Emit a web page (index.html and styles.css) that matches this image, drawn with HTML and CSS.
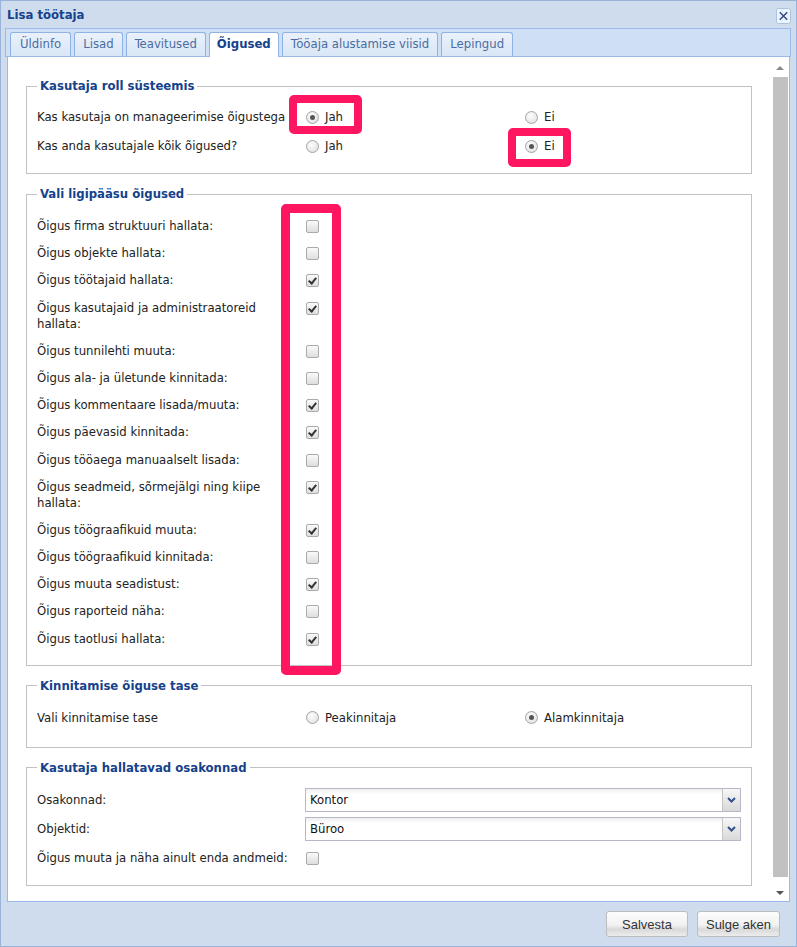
FILE: index.html
```html
<!DOCTYPE html>
<html lang="et">
<head>
<meta charset="utf-8">
<title>Lisa töötaja</title>
<link rel="stylesheet" href="styles.css">
</head>
<body>
<div class="window">
  <div class="titlebar">
    <span class="title">Lisa töötaja</span>
    <span class="close">
      <svg width="15" height="16" viewBox="0 0 15 16"><rect x="0.5" y="0.5" width="14" height="15" rx="2" fill="#eef4fc" stroke="#a9c2e3"/><path d="M3.8 4.3l7.4 7.4M11.2 4.3l-7.4 7.4" stroke="#2f4f86" stroke-width="1.5"/></svg>
    </span>
  </div>

  <div class="tabstrip">
    <div class="tab">Üldinfo</div>
    <div class="tab">Lisad</div>
    <div class="tab">Teavitused</div>
    <div class="tab active">Õigused</div>
    <div class="tab">Tööaja alustamise viisid</div>
    <div class="tab">Lepingud</div>
  </div>

  <div class="body">
    <div class="content">
      <fieldset class="fs fs-role">
        <legend>Kasutaja roll süsteemis</legend>
        <div class="row">
          <span class="label">Kas kasutaja on manageerimise õigustega</span>
          <span class="opt"><span class="radio on"></span>Jah</span>
          <span class="opt"><span class="radio"></span>Ei</span>
        </div>
        <div class="row">
          <span class="label">Kas anda kasutajale kõik õigused?</span>
          <span class="opt"><span class="radio"></span>Jah</span>
          <span class="opt"><span class="radio on"></span>Ei</span>
        </div>
      </fieldset>

      <fieldset class="fs fs-rights">
        <legend>Vali ligipääsu õigused</legend>
        <div class="crow"><span class="label">Õigus firma struktuuri hallata:</span><span class="cb"></span></div>
        <div class="crow"><span class="label">Õigus objekte hallata:</span><span class="cb"></span></div>
        <div class="crow"><span class="label">Õigus töötajaid hallata:</span><span class="cb on"></span></div>
        <div class="crow"><span class="label">Õigus kasutajaid ja administraatoreid<br>hallata:</span><span class="cb on"></span></div>
        <div class="crow"><span class="label">Õigus tunnilehti muuta:</span><span class="cb"></span></div>
        <div class="crow"><span class="label">Õigus ala- ja ületunde kinnitada:</span><span class="cb"></span></div>
        <div class="crow"><span class="label">Õigus kommentaare lisada/muuta:</span><span class="cb on"></span></div>
        <div class="crow"><span class="label">Õigus päevasid kinnitada:</span><span class="cb on"></span></div>
        <div class="crow"><span class="label">Õigus tööaega manuaalselt lisada:</span><span class="cb"></span></div>
        <div class="crow"><span class="label">Õigus seadmeid, sõrmejälgi ning kiipe<br>hallata:</span><span class="cb on"></span></div>
        <div class="crow"><span class="label">Õigus töögraafikuid muuta:</span><span class="cb on"></span></div>
        <div class="crow"><span class="label">Õigus töögraafikuid kinnitada:</span><span class="cb"></span></div>
        <div class="crow"><span class="label">Õigus muuta seadistust:</span><span class="cb on"></span></div>
        <div class="crow"><span class="label">Õigus raporteid näha:</span><span class="cb"></span></div>
        <div class="crow"><span class="label">Õigus taotlusi hallata:</span><span class="cb on"></span></div>
      </fieldset>

      <fieldset class="fs fs-level">
        <legend>Kinnitamise õiguse tase</legend>
        <div class="row">
          <span class="label">Vali kinnitamise tase</span>
          <span class="opt"><span class="radio"></span>Peakinnitaja</span>
          <span class="opt"><span class="radio on"></span>Alamkinnitaja</span>
        </div>
      </fieldset>

      <fieldset class="fs fs-dept">
        <legend>Kasutaja hallatavad osakonnad</legend>
        <div class="combo-row">
          <span class="label">Osakonnad:</span>
          <div class="combo"><span class="combo-text">Kontor</span><span class="trigger"><svg width="9" height="6" viewBox="0 0 9 6"><path d="M1 1l3.5 3.5L8 1" stroke="#33508c" stroke-width="2" fill="none"/></svg></span></div>
        </div>
        <div class="combo-row">
          <span class="label">Objektid:</span>
          <div class="combo"><span class="combo-text">Büroo</span><span class="trigger"><svg width="9" height="6" viewBox="0 0 9 6"><path d="M1 1l3.5 3.5L8 1" stroke="#33508c" stroke-width="2" fill="none"/></svg></span></div>
        </div>
        <div class="crow own">
          <span class="label">Õigus muuta ja näha ainult enda andmeid:</span><span class="cb"></span>
        </div>
      </fieldset>
    </div>

    <div class="scrollbar">
      <div class="arrow up"></div>
      <div class="thumb"></div>
      <div class="arrow down"></div>
    </div>
  </div>

  <div class="footer">
    <button class="btn">Salvesta</button>
    <button class="btn">Sulge aken</button>
  </div>

  <div class="mark mark-jah"></div>
  <div class="mark mark-ei"></div>
  <div class="mark mark-checks"></div>
</div>
</body>
</html>
```

FILE: styles.css
```css
* { box-sizing: border-box; }

html, body {
  margin: 0;
  padding: 0;
  background: #cfdcee;
}

body {
  font-family: "DejaVu Sans Condensed", "DejaVu Sans", sans-serif;
  font-size: 13px;
  color: #222;
}

.window {
  position: relative;
  width: 797px;
  height: 947px;
  background: #cfdcee;
  border: 1px solid #99b4d8;
  display: flex;
  flex-direction: column;
}

/* title */
.titlebar {
  height: 27px;
  display: flex;
  align-items: center;
  justify-content: space-between;
  padding: 0 5px 0 6px;
}
.title {
  font-weight: bold;
  color: #15428b;
  line-height: 16px;
}
.close {
  display: flex;
  width: 15px;
  height: 16px;
  margin-top: 2px;
}

/* tabs */
.tabstrip {
  height: 29px;
  margin: 0 5px 0 4px;
  background: #cfe0f6;
  border: 1px solid #99bbe8;
  display: flex;
  align-items: flex-end;
  gap: 3px;
  padding: 0 0 0 4px;
  position: relative;
}
.tab {
  height: 24px;
  line-height: 22px;
  padding: 0 8px;
  color: #4b6d9e;
  border: 1px solid #8db2e3;
  border-bottom: none;
  border-radius: 3px 3px 0 0;
  background: linear-gradient(#eaf1fb, #d9e6f6);
}
.tab:first-child { padding: 0 9px; }
.tab.active {
  background: #fff;
  color: #15428b;
  font-weight: bold;
  height: 25px;
  margin-bottom: -1px;
  padding: 0 7px;
}

/* body */
.body {
  height: 845px;
  margin: 0 6px 0 6px;
  background: #fff;
  border: 1px solid #99bbe8;
  border-top: none;
  display: flex;
}
.content {
  flex: 1;
  padding: 21px 19px 0 18px;
}

.fs {
  border: 1px solid #c2c2c2;
  margin: 0 0 12px 0;
  padding: 15px 10px 19px 10px;
  min-width: 0;
}
.fs legend {
  font-weight: bold;
  color: #15428b;
  padding: 0 3px;
  line-height: 16px;
}

.fs-role { padding-bottom: 19px; }
.fs-role .row + .row { margin-top: 13px; }
.fs-rights { padding-top: 16px; padding-bottom: 18px; }
.fs-level { padding-top: 16px; padding-bottom: 21px; }
.fs-dept { padding-top: 12px; }

.row {
  display: grid;
  grid-template-columns: 269px 219px auto;
  align-items: center;
  line-height: 16px;
}
.opt {
  display: flex;
  align-items: center;
  gap: 6px;
}

.radio {
  width: 13px;
  height: 13px;
  border-radius: 50%;
  border: 1px solid #a4a4a4;
  background: radial-gradient(circle at 40% 35%, #fdfdfd, #dcdcdc);
  display: inline-flex;
  align-items: center;
  justify-content: center;
}
.radio.on::after {
  content: "";
  width: 5px;
  height: 5px;
  border-radius: 50%;
  background: #555;
}

.fs-rights {
  display: flex;
  flex-direction: column;
  gap: 11.2px;
}

.crow {
  display: grid;
  grid-template-columns: 269px 13px;
  align-items: start;
  line-height: 16px;
}
.cb {
  width: 13px;
  height: 13px;
  margin-top: 2px;
  border: 1px solid #ababab;
  border-radius: 2px;
  background: linear-gradient(#fafafa, #dedede);
  position: relative;
}
.cb.on::after {
  content: "";
  position: absolute;
  left: 3px;
  top: 1px;
  width: 3px;
  height: 6px;
  border: solid #333;
  border-width: 0 2px 2px 0;
  transform: rotate(40deg);
}

.combo-row {
  display: grid;
  grid-template-columns: 268px 1fr;
  align-items: center;
  line-height: 16px;
}
.combo-row + .combo-row { margin-top: 5px; }
.crow.own { margin-top: 9px; }

.combo {
  height: 24px;
  display: flex;
  border: 1px solid #b5b8c8;
  background: linear-gradient(#eeeeee, #ffffff 5px);
}
.combo-text {
  flex: 1;
  padding-left: 4px;
  line-height: 22px;
  color: #111;
}
.trigger {
  width: 18px;
  border-left: 1px solid #c6c6c6;
  background: linear-gradient(#f7f7f7, #d9d9d9);
  display: flex;
  align-items: center;
  justify-content: center;
}

/* scrollbar */
.scrollbar {
  width: 18px;
  display: flex;
  flex-direction: column;
  align-items: center;
  padding: 9px 0 6px;
}
.arrow {
  width: 0;
  height: 0;
  border-left: 4px solid transparent;
  border-right: 4px solid transparent;
}
.arrow.up { border-bottom: 4px solid #8a8a8a; }
.arrow.down { border-top: 4px solid #555; margin-top: 14px; }
.thumb {
  width: 15px;
  margin-top: 7px;
  flex: 1;
  background: #c1c1c1;
}

/* footer */
.footer {
  flex: 1;
  display: flex;
  justify-content: flex-end;
  align-items: flex-start;
  gap: 9px;
  padding: 9px 16px 0 0;
}
.btn {
  font-family: "Liberation Sans", Arial, sans-serif;
  font-size: 13px;
  color: #333;
  height: 26px;
  padding: 0;
  border: 1px solid #bdbdbd;
  border-radius: 3px;
  background: linear-gradient(#fdfdfd 0%, #f1f1f1 55%, #d9d9d9 72%, #ececec 100%);
}
.btn:first-child { width: 82px; }
.btn:last-child { width: 83px; }

/* highlight overlays */
.mark {
  position: absolute;
  border: 8px solid #fe1660;
  border-radius: 5px;
}
.mark-jah { left: 288px; top: 94px; width: 73px; height: 39px; }
.mark-ei { left: 507px; top: 127px; width: 63px; height: 39px; }
.mark-checks { left: 280px; top: 203px; width: 60px; height: 471px; border-width: 9px; }
```
